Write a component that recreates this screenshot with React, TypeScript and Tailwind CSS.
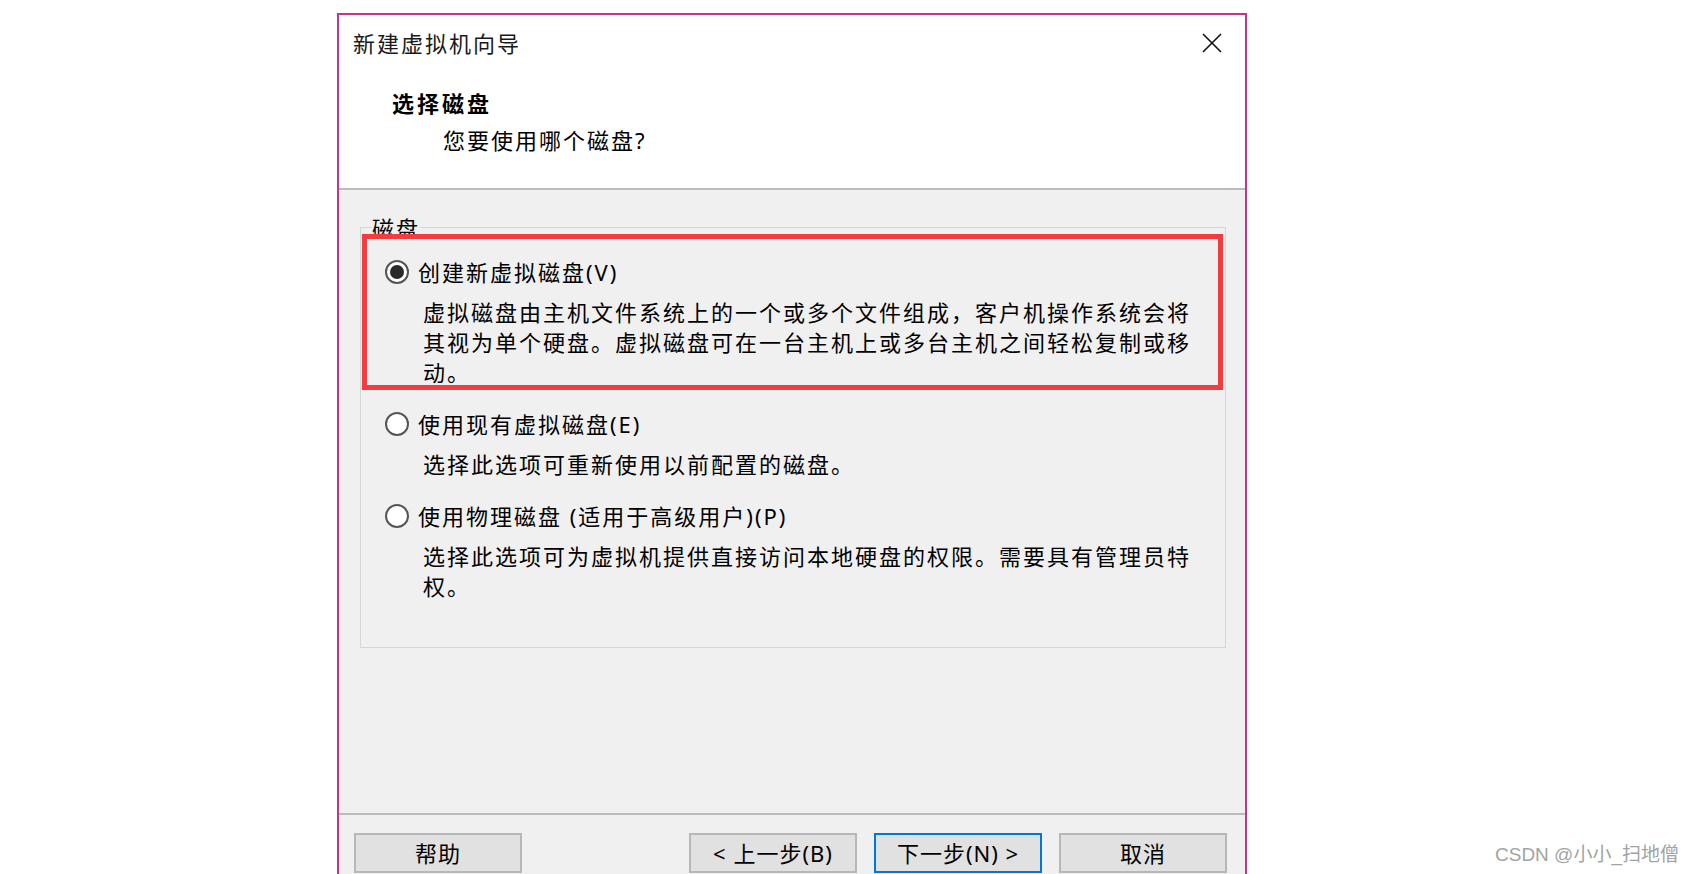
const font = "font-['Noto_Sans','Noto_Sans_CJK_SC',sans-serif]";

function Radio({ checked }: { checked?: boolean }) {
  return (
    <span className="flex h-[24px] w-[24px] shrink-0 items-center justify-center rounded-full border-2 border-[#555555] bg-white">
      {checked && <span className="h-[14px] w-[14px] rounded-full bg-[#2a2a2a]" />}
    </span>
  );
}

function Option({ label, lines, checked }: { label: string; lines: string[]; checked?: boolean }) {
  return (
    <div className="flex flex-col">
      <div className="flex h-[30px] items-center gap-[9px]">
        <Radio checked={checked} />
        <span className="leading-[30px]">{label}</span>
      </div>
      <div className="mt-[10px] ml-[38px] leading-[30px]">
        {lines.map((l) => (
          <div key={l}>{l}</div>
        ))}
      </div>
    </div>
  );
}

function Button({ children, primary }: { children: React.ReactNode; primary?: boolean }) {
  return (
    <div
      className={
        primary
          ? 'flex h-[40px] w-[168px] items-center justify-center border-2 border-[#0078d7] bg-[#e1e1e1] text-[22px] tracking-[1px]'
          : 'flex h-[40px] w-[168px] items-center justify-center border-2 border-[#b7b7b7] bg-[#e1e1e1] text-[22px] tracking-[1px]'
      }
    >
      {children}
    </div>
  );
}

export default function App() {
  return (
    <div className={`relative h-[874px] w-full overflow-hidden bg-white text-black ${font}`}>
      <div className="ml-[337px] mt-[13px] w-[910px] border-2 border-[#cc2f8e] bg-white">
        {/* header */}
        <div className="h-[173px] bg-white pt-[13px] text-[22px] tracking-[2px]">
          <div className="flex h-[30px] items-center justify-between pl-[14px] pr-[23px]">
            <span className="leading-[30px] text-[#1a1a1a]">新建虚拟机向导</span>
            <svg width="20" height="20" viewBox="0 0 20 20">
              <path d="M1 1 L19 19 M19 1 L1 19" stroke="#111" strokeWidth="1.6" fill="none" />
            </svg>
          </div>
          <div className="mt-[30px] pl-[53px] font-bold leading-[30px] tracking-[3px]">选择磁盘</div>
          <div className="mt-[7px] pl-[104px] leading-[30px]">您要使用哪个磁盘?</div>
        </div>
        <div className="h-[2px] bg-[#bcbcbc]" />

        {/* body */}
        <div className="h-[623px] bg-[#f0f0f0] pt-[37px] text-[22px] tracking-[2px]">
          <div className="relative ml-[21px] h-[421px] w-[866px] border border-[#d6d6d6] pl-[24px] pt-[29px]">
            <span className="absolute left-[11px] top-[-15px] bg-[#f0f0f0] leading-[30px]">磁盘</span>
            <div className="absolute left-[1px] top-[6px] h-[156px] w-[861px] border-[5px] border-[#f23c3f]" />
            <div className="flex flex-col gap-[22px]">
              <Option
                checked
                label="创建新虚拟磁盘(V)"
                lines={[
                  '虚拟磁盘由主机文件系统上的一个或多个文件组成，客户机操作系统会将',
                  '其视为单个硬盘。虚拟磁盘可在一台主机上或多台主机之间轻松复制或移',
                  '动。',
                ]}
              />
              <Option label="使用现有虚拟磁盘(E)" lines={['选择此选项可重新使用以前配置的磁盘。']} />
              <Option
                label="使用物理磁盘 (适用于高级用户)(P)"
                lines={['选择此选项可为虚拟机提供直接访问本地硬盘的权限。需要具有管理员特', '权。']}
              />
            </div>
          </div>
        </div>
        <div className="h-[2px] bg-[#bcbcbc]" />

        {/* footer */}
        <div className="flex h-[80px] items-start bg-[#f0f0f0] pl-[15px] pr-[18px] pt-[18px]">
          <Button>帮助</Button>
          <div className="flex-1" />
          <div className="flex gap-[17px]">
            <Button>&lt; 上一步(B)</Button>
            <Button primary>下一步(N) &gt;</Button>
            <Button>取消</Button>
          </div>
        </div>
      </div>

      <div className="absolute left-[1495px] top-[843px] text-[19px] leading-[24px] text-[#a3a3a3] font-['Liberation_Sans','Noto_Sans_CJK_SC',sans-serif]">
        CSDN @小小_扫地僧
      </div>
    </div>
  );
}
